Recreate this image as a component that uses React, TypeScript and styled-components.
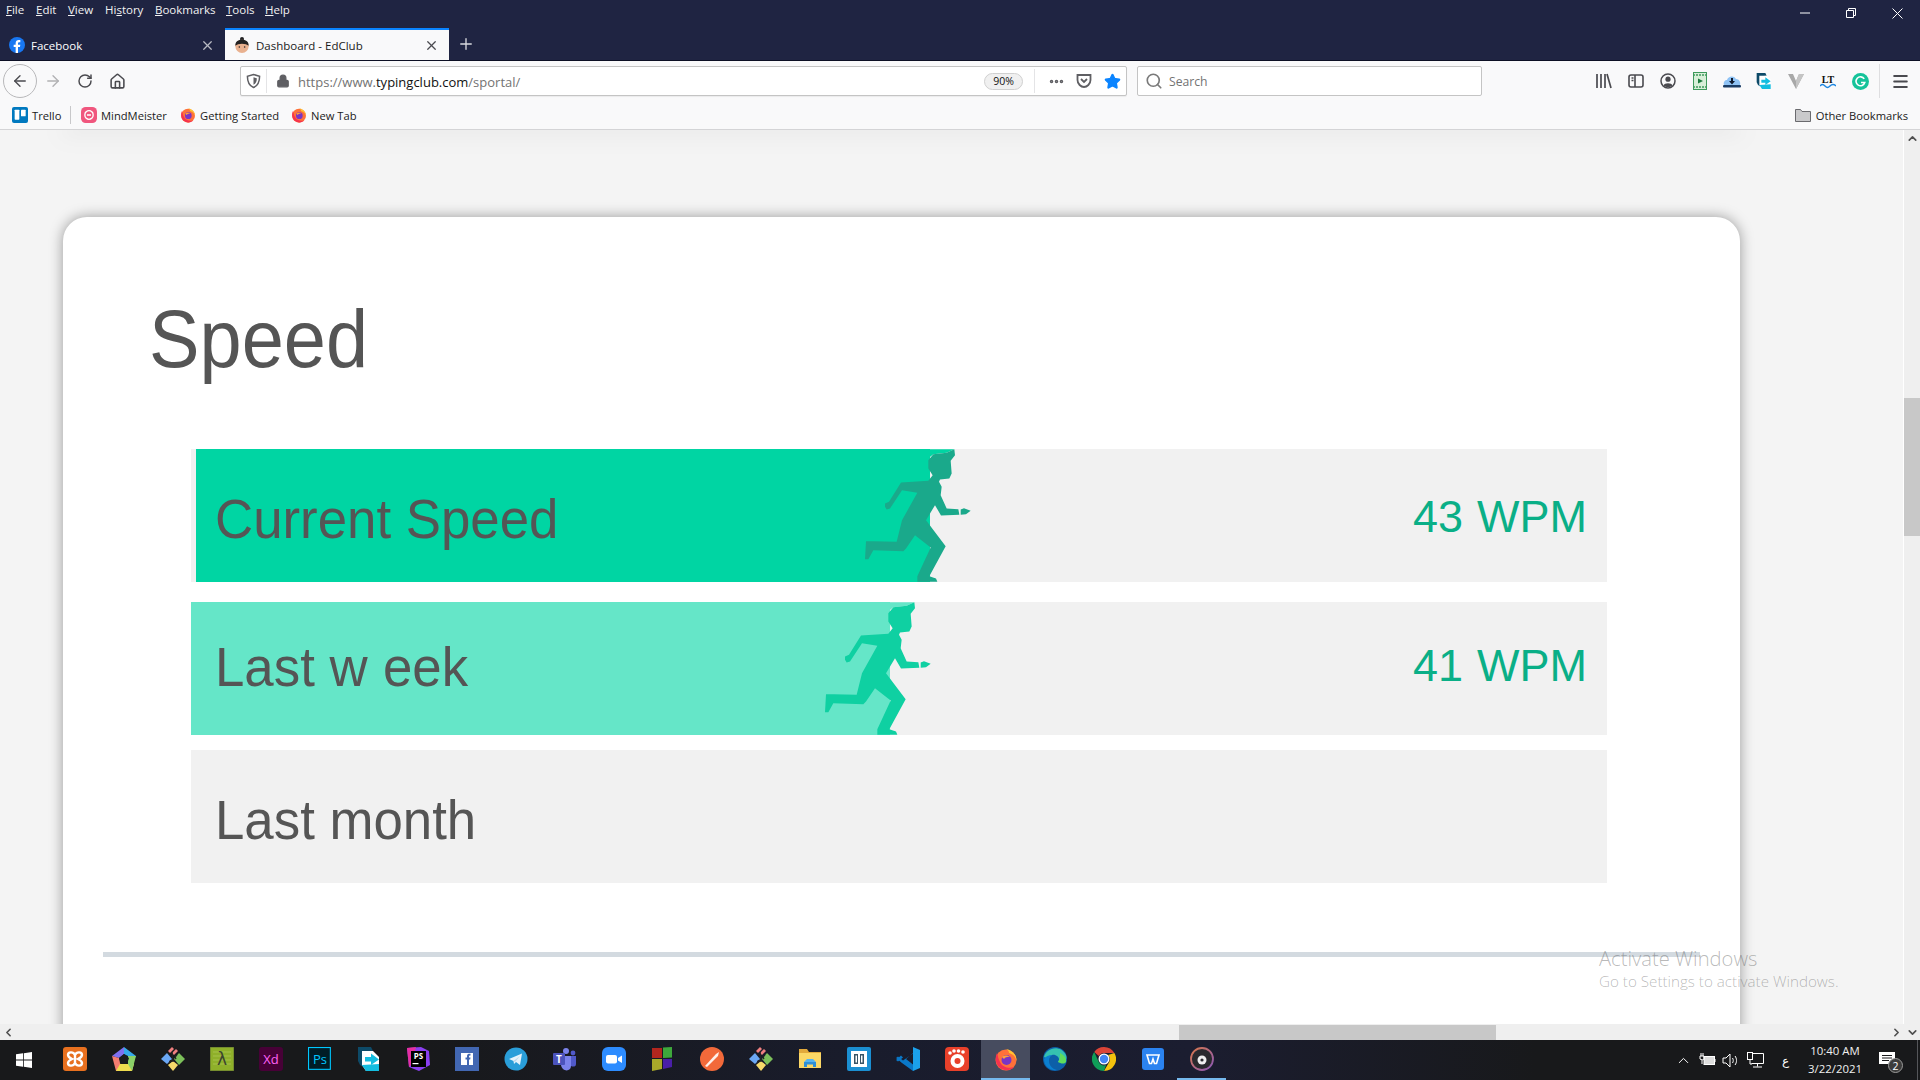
import React from "react";
import styled, { createGlobalStyle } from "styled-components";
import {
  ArrowLeft,
  ArrowRight,
  RotateCw,
  Home,
  Lock,
  Search,
  X,
  Plus,
  Menu,
  ChevronUp,
  ChevronDown,
  ChevronLeft,
  ChevronRight,
  MoreHorizontal,
  Star,
} from "lucide-react";

const GlobalStyle = createGlobalStyle`
  html, body {
    margin: 0;
    padding: 0;
    overflow: hidden;
  }
  * {
    box-sizing: border-box;
  }
`;

const Screen = styled.div`
  display: flex;
  flex-direction: column;
  width: 1920px;
  height: 1080px;
  overflow: hidden;
  font-family: "Open Sans", sans-serif;
`;

const TitleBar = styled.div`
  height: 61px;
  flex: none;
  background-color: #1f2442;
  color: #ffffff;
  border-bottom: 1px solid #0c0f24;
`;

const MenuRow = styled.div`
  display: flex;
  height: 28px;
`;

const MenuItem = styled.span<{ $width: number }>`
  width: ${(p) => p.$width}px;
  padding-top: 1px;
  font-size: 11.5px;
  line-height: 18px;
  color: #f2f2f2;
  u {
    text-decoration-thickness: 1px;
  }
`;

const MenuItems = styled.div`
  display: flex;
  padding-left: 6px;
`;

const WindowControls = styled.div`
  display: flex;
  margin-left: auto;
`;

const WindowButton = styled.div`
  display: flex;
  align-items: center;
  justify-content: center;
  width: 46px;
  height: 26px;
`;

const TabRow = styled.div`
  display: flex;
  align-items: stretch;
  height: 32px;
`;

const Tab = styled.div<{ $active?: boolean; $width: number }>`
  display: flex;
  align-items: center;
  gap: 6px;
  width: ${(p) => p.$width}px;
  padding: 0 10px 0 9px;
  font-size: 11.5px;
  color: ${(p) => (p.$active ? "#1b1b1b" : "#ffffff")};
  background-color: ${(p) => (p.$active ? "#f9f9fa" : "transparent")};
  border-top: 2px solid ${(p) => (p.$active ? "#0a84ff" : "transparent")};
`;

const TabClose = styled.span`
  display: flex;
  margin-left: auto;
`;

const NewTab = styled.div`
  display: flex;
  align-items: center;
  justify-content: center;
  width: 34px;
  color: #d8d9de;
`;

const Toolbar = styled.div`
  display: flex;
  align-items: center;
  flex: none;
  height: 40px;
  padding-left: 3px;
  background-color: #f9f9fa;
`;

const BackButton = styled.div`
  display: flex;
  align-items: center;
  justify-content: center;
  width: 34px;
  height: 34px;
  border: 1px solid #b8b8ba;
  border-radius: 50%;
  color: #4a4a4f;
`;

const NavSlot = styled.div<{ $dim?: boolean }>`
  display: flex;
  align-items: center;
  justify-content: center;
  width: 32px;
  height: 32px;
  color: ${(p) => (p.$dim ? "#b1b1b3" : "#4a4a4f")};
`;

const UrlBar = styled.div`
  display: flex;
  align-items: center;
  width: 887px;
  height: 30px;
  margin-left: 107px;
  background-color: #ffffff;
  border: 1px solid #c4c4c4;
  border-radius: 2px;
  box-shadow: 0 1px 1px rgba(0, 0, 0, 0.06);
`;

const ShieldBox = styled.div`
  display: flex;
  align-items: center;
  justify-content: center;
  width: 26px;
  height: 24px;
  border-right: 1px solid #e4e4e6;
`;

const LockBox = styled.div`
  display: flex;
  justify-content: center;
  width: 31px;
  color: #5f5f63;
`;

const UrlText = styled.span`
  padding-top: 1px;
  font-size: 13px;
  color: #737373;
  b {
    font-weight: 400;
    color: #111111;
  }
`;

const ZoomBadge = styled.span`
  display: flex;
  align-items: center;
  justify-content: center;
  width: 39px;
  height: 17px;
  margin-left: auto;
  margin-right: 11px;
  font-size: 10.5px;
  color: #111111;
  background-color: #f0f0f0;
  border: 1px solid #d0d0d0;
  border-radius: 9px;
`;

const UrlActions = styled.div`
  display: flex;
  align-items: center;
  height: 24px;
  padding-left: 7px;
  border-left: 1px solid #e4e4e6;
`;

const ActionSlot = styled.div`
  display: flex;
  align-items: center;
  justify-content: center;
  width: 28px;
  color: #5f5f63;
`;

const SearchBar = styled.div`
  display: flex;
  align-items: center;
  gap: 6px;
  width: 345px;
  height: 30px;
  margin-left: 10px;
  padding-left: 7px;
  font-size: 12.2px;
  color: #737373;
  background-color: #ffffff;
  border: 1px solid #c4c4c4;
  border-radius: 2px;
`;

const Extensions = styled.div`
  display: flex;
  align-items: center;
  margin-left: auto;
`;

const ExtSlot = styled.div`
  display: flex;
  align-items: center;
  justify-content: center;
  width: 32px;
`;

const ToolbarDivider = styled.div`
  width: 1px;
  height: 34px;
  margin-left: 3px;
  background-color: #dedee0;
`;

const MenuSlot = styled.div`
  display: flex;
  align-items: center;
  justify-content: center;
  width: 40px;
  color: #4a4a4f;
`;

const BookmarksBar = styled.div`
  display: flex;
  align-items: center;
  flex: none;
  height: 29px;
  padding-left: 12px;
  font-size: 11.2px;
  color: #1b1b1b;
  background-color: #f9f9fa;
  border-bottom: 1px solid #d4d4d6;
`;

const Bookmark = styled.div<{ $width: number }>`
  display: flex;
  align-items: center;
  gap: 4px;
  width: ${(p) => p.$width}px;
`;

const BookmarkDivider = styled.div`
  width: 1px;
  height: 18px;
  margin-right: 10px;
  background-color: #c8c8ca;
`;

const OtherBookmarks = styled.div`
  display: flex;
  align-items: center;
  gap: 5px;
  margin-left: auto;
  margin-right: 12px;
`;

const Body = styled.div`
  display: flex;
  flex: 1;
  min-height: 0;
`;

const PageColumn = styled.div`
  display: flex;
  flex: 1;
  flex-direction: column;
  min-width: 0;
`;

const Canvas = styled.div`
  position: relative;
  flex: 1;
  overflow: hidden;
  padding-left: 63px;
  background-color: #f4f4f4;
  border-right: 1px solid #ffffff;
`;

const PrevCardEdge = styled.div`
  width: 1677px;
  height: 1px;
  margin-top: -1px;
  box-shadow: 0 1px 20px rgba(0, 0, 0, 0.55);
`;

const Card = styled.div`
  width: 1677px;
  height: 900px;
  margin-top: 87px;
  padding-top: 77px;
  background-color: #ffffff;
  border-radius: 24px;
  box-shadow: 0 0 14px rgba(0, 0, 0, 0.38);
`;

const Heading = styled.h1`
  height: 90px;
  margin: 0 0 65px 86px;
  font-family: "Liberation Sans", Arial, sans-serif;
  font-size: 81px;
  font-weight: 400;
  line-height: 90px;
  color: #555555;
  transform: scaleX(0.935);
  transform-origin: left center;
`;

const SpeedRow = styled.div<{ $gap: number }>`
  display: flex;
  align-items: stretch;
  width: 1416px;
  height: 133px;
  margin-left: 128px;
  margin-bottom: ${(p) => p.$gap}px;
  font-family: "Liberation Sans", Arial, sans-serif;
  background-color: #f1f1f1;
`;

const Fill = styled.div<{
  $color: string;
  $offset: number;
  $pad: number;
  $width: number;
  $top: number;
  $bottom: number;
}>`
  position: relative;
  display: flex;
  align-items: center;
  width: ${(p) => p.$width}px;
  margin-left: ${(p) => p.$offset}px;
  padding: ${(p) => p.$top}px 0 ${(p) => p.$bottom}px ${(p) => p.$pad}px;
  background-color: ${(p) => p.$color};
`;

const RowLabel = styled.span`
  display: inline-block;
  font-size: 55px;
  white-space: nowrap;
  color: #555555;
  transform: scaleX(0.96);
  transform-origin: left center;
`;

const GapLetter = styled.span`
  margin-right: 16px;
`;

const RunnerSpot = styled.div`
  position: absolute;
  top: 0;
  right: -41px;
  display: flex;
`;

const SpeedValue = styled.span<{ $top: number; $bottom: number }>`
  display: flex;
  align-items: center;
  gap: 14px;
  margin-left: auto;
  padding: ${(p) => p.$top}px 20px ${(p) => p.$bottom}px 0;
  font-size: 45px;
  color: #0aaf87;
`;

const Divider = styled.div`
  height: 5px;
  margin: 69px 40px 0;
  background-color: #d3dae0;
`;

const ActivateNotice = styled.div`
  position: absolute;
  left: 1599px;
  top: 815px;
  color: rgba(70, 70, 70, 0.38);
  pointer-events: none;
`;

const ActivateTitle = styled.div`
  font-size: 20.2px;
  font-weight: 300;
  line-height: 26px;
`;

const ActivateHint = styled.div`
  font-size: 15.2px;
  font-weight: 300;
  line-height: 20px;
`;

const HScroll = styled.div`
  display: flex;
  align-items: center;
  flex: none;
  height: 16px;
  color: #505050;
  background-color: #efefef;
`;

const ScrollArrow = styled.div`
  display: flex;
  align-items: center;
  justify-content: center;
  flex: none;
  width: 16px;
  height: 16px;
`;

const HThumb = styled.div`
  width: 317px;
  height: 15px;
  margin-left: 1163px;
  background-color: #c8c8c8;
`;

const VScroll = styled.div`
  display: flex;
  flex: none;
  flex-direction: column;
  width: 16px;
  color: #505050;
  background-color: #efefef;
`;

const VThumb = styled.div`
  height: 138px;
  margin-top: 252px;
  background-color: #c8c8c8;
`;

const PushEnd = styled.div`
  margin: auto 0 0 auto;
`;

const Taskbar = styled.div`
  display: flex;
  align-items: stretch;
  flex: none;
  height: 40px;
  padding-left: 1px;
  background: linear-gradient(90deg, #18191b 0%, #18191b 22%, #191c2c 45%, #1b1d30 62%, #18191b 80%);
`;

const StartSlot = styled.div`
  display: flex;
  align-items: center;
  justify-content: center;
  width: 49px;
  padding-right: 3px;
`;

const TaskSlot = styled.div<{ $active?: boolean; $running?: boolean }>`
  display: flex;
  align-items: center;
  justify-content: center;
  width: 49px;
  background-color: ${(p) => (p.$active ? "#474c5f" : "transparent")};
  border-bottom: 2px solid ${(p) => (p.$active || p.$running ? "#76b9ed" : "transparent")};
`;

const Tray = styled.div`
  display: flex;
  align-items: center;
  margin-left: auto;
  color: #ffffff;
`;

const TraySlot = styled.div<{ $width: number }>`
  display: flex;
  align-items: center;
  justify-content: center;
  width: ${(p) => p.$width}px;
`;

const KeyboardGlyph = styled.span`
  font-size: 12px;
`;

const Clock = styled.div`
  width: 72px;
  font-size: 11.4px;
  line-height: 18px;
  text-align: center;
  color: #f0f0f0;
`;

const NotifySlot = styled.div`
  position: relative;
  display: flex;
  justify-content: center;
  width: 32px;
`;

const NotifyBadge = styled.span`
  position: absolute;
  left: 17px;
  top: 7px;
  display: flex;
  align-items: center;
  justify-content: center;
  width: 15px;
  height: 15px;
  font-size: 10.5px;
  color: #ffffff;
  background-color: #3c3c3c;
  border: 1px solid #9a9a9a;
  border-radius: 50%;
`;

const ShowDesktop = styled.div`
  align-self: stretch;
  width: 17px;
  margin-left: 0;
  padding-left: 14px;
  &::after {
    content: "";
    display: block;
    width: 1px;
    height: 100%;
    background-color: #55565a;
  }
`;

const Ic = ({ size = 24, children, vb = "0 0 24 24" }: { size?: number; children: React.ReactNode; vb?: string }) => (
  <svg width={size} height={size} viewBox={vb} style={{ display: "block" }}>
    {children}
  </svg>
);

const RunnerFigure = ({ body, wedge }: { body: string; wedge: string }) => (
  <svg width={106} height={133} viewBox="75 27 318 398" style={{ display: "block" }}>
    <path d="M268 27H343L320 38 280 42 268 52Z" fill={wedge} />
    <path
      d="M343 27L345 45 332 62 335 100 328 115 300 118 297 125 305 140 302 165 320 205 355 207 358 224 303 226 285 195 258 240 317 318 268 408 288 415 292 425H232V408L272 322 225 285 198 325 190 333 100 330 85 357H75L78 303H100L170 305 186 240 232 158 186 150 150 205 140 208 135 200V190L147 185 183 127 265 122 278 105 265 85V60L280 42 320 38Z"
      fill={body}
    />
    <path d="M362 208L372 204 392 212 378 222 362 224Z" fill={body} />
  </svg>
);

const FirefoxIcon = ({ size = 24 }: { size?: number }) => (
  <Ic size={size}>
    <circle cx="12" cy="13" r="10.5" fill="#ff7139" />
    <path d="M12 2C18 3 23 8 22.5 14 21 7 17 7 15 6 15 4 14 3 12 2Z" fill="#ffc531" />
    <path d="M3 6C1 10 1 17 6 21 10 24 17 24 20 20 15 22 8 20 6 15 4 12 4 8 3 6Z" fill="#f5324f" />
    <circle cx="12.5" cy="13" r="5" fill="#7a35c4" />
    <path d="M8 10C10 8 14 8 16 10 14 9.5 11 10.5 10 12Z" fill="#ffa436" />
  </Ic>
);

const KrakenIcon = () => (
  <Ic>
    <path d="M0 12L6 6 11 12 6 17Z" fill="#6ba7f5" />
    <path d="M13 12L18 6 24 12 18 18Z" fill="#7cc05a" />
    <path d="M7 18L12 14 17 18 12 24Z" fill="#f6d96a" />
    <path d="M7 4L11 0 13 2 9 6ZM11 6L15 2 17 4 13 8Z" fill="#f08080" />
    <path d="M11 5L12 15M15 12C13 9 15 8 16 9M9 16C8 14 10 13 11 14" stroke="#222" strokeWidth="1.4" fill="none" />
  </Ic>
);

const DocArrowIcon = ({ size = 24 }: { size?: number }) => (
  <Ic size={size}>
    <path d="M1 0H14L16 4 6 5V20L3 18 1 14Z" fill="#0d4a68" />
    <path d="M5 4H16L22 10V24H9L5 18Z" fill="#ffffff" />
    <path d="M9 24L5 18 22 17V24Z" fill="#14bde0" />
    <path d="M8 10H14V6.5L22 12.5 14 18V14.5H8Z" fill="#14bde0" />
  </Ic>
);

const TaskIcons: { key: string; node: React.ReactNode; active?: boolean; running?: boolean }[] = [
  {
    key: "xampp",
    node: (
      <Ic>
        <rect width="24" height="24" rx="3" fill="#e8701f" />
        <path
          d="M12 8C10 4 5 5 5 8 5 10 7 11 9 12 7 13 5 14 5 16 5 19 10 20 12 16 14 20 19 19 19 16 19 14 17 13 15 12 17 11 19 10 19 8 19 5 14 4 12 8ZM12 8V16"
          stroke="#fff"
          strokeWidth="2.4"
          fill="none"
        />
      </Ic>
    ),
  },
  {
    key: "pentagon",
    node: (
      <Ic>
        <path d="M12 0L24 9 21 14 16 9 12 7Z" fill="#36a9ea" />
        <path d="M12 0L0 9 7 11 12 7Z" fill="#7e70f0" />
        <path d="M0 9L4 24H11L8 16 7 11Z" fill="#f47c70" />
        <path d="M4 24H20L22 17 16 17 8 17Z" fill="#efdc4e" />
        <path d="M24 9L20 24 16 17 16 9Z" fill="#8ad068" />
        <path d="M12 7L17 11 15 17H9L7 11Z" fill="#1b1b1d" />
      </Ic>
    ),
  },
  { key: "kraken", node: <KrakenIcon /> },
  {
    key: "lambda",
    node: (
      <Ic>
        <rect width="24" height="24" fill="#8fb02a" stroke="#5c6b33" />
        <path d="M3 5H21M3 9H21M3 13H21M3 17H21" stroke="#a6c24a" strokeWidth="1" />
        <text x="12" y="18" textAnchor="middle" fontSize="17" fontFamily="DejaVu Sans" fill="#3c4430">
          λ
        </text>
      </Ic>
    ),
  },
  {
    key: "xd",
    node: (
      <Ic>
        <rect width="24" height="24" rx="3" fill="#470137" />
        <text x="12" y="17" textAnchor="middle" fontSize="13" fontFamily="Open Sans" fill="#ff61f6">
          Xd
        </text>
      </Ic>
    ),
  },
  {
    key: "ps",
    node: (
      <Ic>
        <rect x=".5" y=".5" width="20" height="20" fill="#001d26" stroke="#00c8ff" strokeWidth="1" transform="scale(1.09)" />
        <text x="12" y="17" textAnchor="middle" fontSize="13" fontFamily="Open Sans" fill="#00c8ff">
          Ps
        </text>
      </Ic>
    ),
  },
  { key: "doc", node: <DocArrowIcon /> },
  {
    key: "phpstorm",
    node: (
      <Ic>
        <path d="M1 1L15 0 23 4 24 18 13 24 3 20Z" fill="#8a3ff0" />
        <path d="M1 1L10 0 5 18 3 20Z" fill="#e62ea0" />
        <rect x="5" y="4" width="15" height="16" fill="#000" />
        <text x="12.5" y="12" textAnchor="middle" fontSize="8" fontWeight="700" fontFamily="Open Sans" fill="#fff">
          PS
        </text>
        <rect x="6.5" y="16" width="6" height="1.2" fill="#fff" />
      </Ic>
    ),
  },
  {
    key: "facebook",
    node: (
      <Ic>
        <rect width="24" height="24" fill="#4267b2" />
        <rect x="6" y="6" width="12" height="12" fill="#fff" />
        <path d="M12 18V12.5H10.5V10.5H12V9C12 7 13.5 6.5 15.5 6.7V8.5C14.5 8.4 14 8.6 14 9.4V10.5H15.5L15.2 12.5H14V18Z" fill="#4267b2" />
      </Ic>
    ),
  },
  {
    key: "telegram",
    node: (
      <Ic>
        <circle cx="12" cy="12" r="11.5" fill="#2a9ed9" />
        <path d="M5 12L18 6.5 16 18 12 15 10 17 9.5 14Z" fill="#e6f3fb" />
        <path d="M9.5 14L16 9 11 15Z" fill="#bcd9ec" />
      </Ic>
    ),
  },
  {
    key: "teams",
    node: (
      <Ic>
        <circle cx="13" cy="4" r="3" fill="#7b83eb" />
        <circle cx="20" cy="6" r="2.4" fill="#5059c9" />
        <path d="M16 9H23V17C23 20 20 20 18 19Z" fill="#5059c9" />
        <path d="M8 9H18V19C18 25 9 25 8 18Z" fill="#7b83eb" />
        <rect y="6" width="12" height="12" rx="1" fill="#4b53bc" />
        <text x="6" y="15.5" textAnchor="middle" fontSize="10" fontWeight="700" fontFamily="Open Sans" fill="#fff">
          T
        </text>
      </Ic>
    ),
  },
  {
    key: "zoom",
    node: (
      <Ic>
        <rect width="24" height="24" rx="6" fill="#2d8cff" />
        <rect x="4" y="8" width="11" height="8.5" rx="2" fill="#fff" />
        <path d="M16 11L20 8.5V16L16 13.5Z" fill="#fff" />
      </Ic>
    ),
  },
  {
    key: "squares",
    node: (
      <Ic>
        <path d="M1 1H11V11H1Z" fill="#b3261e" />
        <path d="M12 0.5L21 0V10.5L12 11Z" fill="#3ea83c" />
        <path d="M1 12L11 12V22L1 24Z" fill="#a8a82a" />
        <path d="M12 12H21V20L12 22Z" fill="#4a1fa8" />
      </Ic>
    ),
  },
  {
    key: "postman",
    node: (
      <Ic>
        <circle cx="12" cy="12" r="12" fill="#f2693a" />
        <path d="M5 19L16 7 19 5 18 9 7 20Z" fill="#fff" opacity=".9" />
      </Ic>
    ),
  },
  { key: "kraken2", node: <KrakenIcon /> },
  {
    key: "folder",
    node: (
      <Ic>
        <path d="M1 2H9L11 5H23V21H1Z" fill="#e2a93b" />
        <path d="M1 6H23V21H1Z" fill="#fbd766" />
        <path d="M6 20V15H18V20H15V17.5H9V20Z" fill="#2f8fd6" />
        <path d="M6 15L9 12H15L18 15Z" fill="#56b4f0" />
      </Ic>
    ),
  },
  {
    key: "brackets",
    node: (
      <Ic>
        <rect width="24" height="24" rx="2" fill="#1b8fd2" />
        <path d="M4 4H20V20H4Z" fill="#fff" />
        <path d="M7 7H11V17H7ZM13 7H17V17H13Z" fill="#16364a" opacity=".85" />
        <path d="M8.5 8.5H10V15.5H8.5ZM14 8.5H15.5V15.5H14Z" fill="#fff" />
      </Ic>
    ),
  },
  {
    key: "vscode",
    node: (
      <Ic>
        <path d="M17 0L24 3V21L17 24Z" fill="#1ba1ec" />
        <path d="M17 0V6.5L7 13.5 2 9.5 0 11 6 16 17 24V17.5L10 12 17 6Z" fill="#0a78c8" />
        <path d="M0 13L2 14.5 7 10.5 5 8.5Z" fill="#0a78c8" />
      </Ic>
    ),
  },
  {
    key: "gom",
    node: (
      <Ic>
        <rect width="24" height="24" rx="4" fill="#e8402a" />
        <circle cx="12.5" cy="14" r="7" fill="#fff" />
        <circle cx="12.5" cy="14" r="3" fill="#e8402a" />
        <circle cx="5" cy="6" r="1.8" fill="#fff" />
        <circle cx="9" cy="4" r="1.8" fill="#fff" />
        <circle cx="13.5" cy="4" r="1.8" fill="#fff" />
        <circle cx="18" cy="5" r="1.8" fill="#fff" />
      </Ic>
    ),
  },
  { key: "firefox", node: <FirefoxIcon />, active: true },
  {
    key: "edge",
    node: (
      <Ic>
        <circle cx="12" cy="12" r="12" fill="#0d5fa8" />
        <path d="M1 10C3 1 17-3 23 8 25 15 19 16 15 15 18 12 14 7 9 8 5 9 3 12 1 10Z" fill="#35c1b0" />
        <path d="M17 6C21 8 24 11 23 15 21 18 17 16 15 15 17 12 17 9 17 6Z" fill="#5fdc5c" />
        <path d="M9 8C4 11 5 21 14 23 8 24 1 20 1 12 3 9 6 8 9 8Z" fill="#0b7fd0" />
      </Ic>
    ),
  },
  {
    key: "chrome",
    node: (
      <Ic>
        <path d="M12 0A12 12 0 0 1 22.4 6H12A6 6 0 0 0 6.8 9L2.2 5A12 12 0 0 1 12 0Z" fill="#db4437" />
        <path d="M22.4 6A12 12 0 0 1 12 24L17.2 15A6 6 0 0 0 16 8Z" fill="#f4c20d" />
        <path d="M12 24A12 12 0 0 1 2.2 5L6.8 15A6 6 0 0 0 14 18Z" fill="#0f9d58" />
        <circle cx="12" cy="12" r="5.5" fill="#fff" />
        <circle cx="12" cy="12" r="4.2" fill="#4285f4" />
      </Ic>
    ),
  },
  {
    key: "wps",
    node: (
      <Ic>
        <rect x="1" y="1" width="22" height="22" rx="3" fill="#2b83f0" />
        <path d="M6 8H18L15.5 16.5H13.5L12 12 10.5 16.5H8.5Z" fill="none" stroke="#fff" strokeWidth="1.6" />
      </Ic>
    ),
  },
  {
    key: "disc",
    running: true,
    node: (
      <Ic>
        <defs>
          <linearGradient id="discRing" x1="0" y1="0" x2="1" y2="1">
            <stop offset="0" stopColor="#d9774a" />
            <stop offset="1" stopColor="#8a58b8" />
          </linearGradient>
        </defs>
        <circle cx="12" cy="12" r="11" fill="#2a2a2e" stroke="url(#discRing)" strokeWidth="1.8" />
        <circle cx="12" cy="13" r="4.5" fill="#f0f0f0" />
        <circle cx="12" cy="13" r="1.6" fill="#2a2a2e" />
      </Ic>
    ),
  },
];

const App = () => {
  return (
    <Screen>
      <GlobalStyle />
      <TitleBar>
        <MenuRow>
          <MenuItems>
            <MenuItem $width={30}><u>F</u>ile</MenuItem>
            <MenuItem $width={32}><u>E</u>dit</MenuItem>
            <MenuItem $width={37}><u>V</u>iew</MenuItem>
            <MenuItem $width={50}>Hi<u>s</u>tory</MenuItem>
            <MenuItem $width={71}><u>B</u>ookmarks</MenuItem>
            <MenuItem $width={39}><u>T</u>ools</MenuItem>
            <MenuItem $width={30}><u>H</u>elp</MenuItem>
          </MenuItems>
          <WindowControls>
            <WindowButton>
              <svg width="10" height="10" viewBox="0 0 10 10">
                <path d="M0 5H10" stroke="#fff" />
              </svg>
            </WindowButton>
            <WindowButton>
              <svg width="10" height="10" viewBox="0 0 10 10" fill="none" stroke="#fff">
                <path d="M.5 2.5H7.5V9.5H.5ZM2.5 2.5V.5H9.5V7.5H7.5" />
              </svg>
            </WindowButton>
            <WindowButton>
              <svg width="11" height="11" viewBox="0 0 11 11" stroke="#fff">
                <path d="M.5 .5L10.5 10.5M10.5 .5L.5 10.5" />
              </svg>
            </WindowButton>
          </WindowControls>
        </MenuRow>
        <TabRow>
          <Tab $width={225}>
            <Ic size={16}>
              <circle cx="12" cy="12" r="12" fill="#1877f2" />
              <path d="M10 24V15H7V11.5H10V9C10 6 12 4.5 14.5 4.5H17V8H15C14 8 13.5 8.5 13.5 9.5V11.5H17L16.4 15H13.5V24Z" fill="#fff" />
            </Ic>
            Facebook
            <TabClose><X size={15} color="#b9bac2" strokeWidth={2} /></TabClose>
          </Tab>
          <Tab $active $width={224}>
            <Ic size={16}>
              <circle cx="12" cy="3" r="3" fill="#222" />
              <circle cx="12" cy="14" r="10" fill="#e9b18f" />
              <path d="M2 13C2 6 7 4 12 4S22 6 22 13C18 9 6 9 2 13Z" fill="#222" />
              <circle cx="8" cy="15" r="1.2" fill="#222" />
              <circle cx="16" cy="15" r="1.2" fill="#222" />
            </Ic>
            Dashboard - EdClub
            <TabClose><X size={15} color="#4a4a4f" strokeWidth={2} /></TabClose>
          </Tab>
          <NewTab><Plus size={18} strokeWidth={1.8} /></NewTab>
        </TabRow>
      </TitleBar>

      <Toolbar>
        <BackButton><ArrowLeft size={18} strokeWidth={1.8} /></BackButton>
        <NavSlot $dim><ArrowRight size={18} strokeWidth={1.8} /></NavSlot>
        <NavSlot><RotateCw size={16} strokeWidth={2.2} /></NavSlot>
        <NavSlot><Home size={17} strokeWidth={2.2} /></NavSlot>
        <UrlBar>
          <ShieldBox>
            <svg width="15" height="16" viewBox="0 0 16 16" fill="none" stroke="#5f5f63" strokeWidth="1.6">
              <path d="M8 1L14.5 3C14.5 9 13 13 8 15 3 13 1.5 9 1.5 3Z" />
              <path d="M8 4L11.5 5C11.5 8 11 10.5 8 12Z" fill="#5f5f63" stroke="none" />
            </svg>
          </ShieldBox>
          <LockBox><Lock size={14} fill="#5f5f63" strokeWidth={2} /></LockBox>
          <UrlText>https://www.<b>typingclub.com</b>/sportal/</UrlText>
          <ZoomBadge>90%</ZoomBadge>
          <UrlActions>
            <ActionSlot><MoreHorizontal size={17} strokeWidth={3} /></ActionSlot>
            <ActionSlot>
              <svg width="16" height="16" viewBox="0 0 16 16" fill="none" stroke="#5f5f63" strokeWidth="1.8">
                <path d="M1.5 2H14.5V7C14.5 11 11 14 8 14S1.5 11 1.5 7Z" />
                <path d="M5 6L8 9 11 6" />
              </svg>
            </ActionSlot>
            <ActionSlot><Star size={17} fill="#0a84ff" color="#0a84ff" strokeWidth={2} /></ActionSlot>
          </UrlActions>
        </UrlBar>
        <SearchBar>
          <Search size={18} color="#7a7a7a" strokeWidth={2.2} />
          Search
        </SearchBar>
        <Extensions>
          <ExtSlot>
            <svg width="16" height="16" viewBox="0 0 16 16" stroke="#4a4a4f" strokeWidth="1.7" fill="none">
              <path d="M1 1V15M5 1V15M9 1V15M11 1L15 15" />
            </svg>
          </ExtSlot>
          <ExtSlot>
            <svg width="16" height="16" viewBox="0 0 16 16" stroke="#4a4a4f" strokeWidth="1.6" fill="none">
              <rect x="1" y="2" width="14" height="12" rx="2" />
              <path d="M7 2V14M3.5 5H5.5M3.5 7.5H5.5" />
            </svg>
          </ExtSlot>
          <ExtSlot>
            <svg width="16" height="16" viewBox="0 0 16 16">
              <circle cx="8" cy="8" r="7" fill="none" stroke="#4a4a4f" strokeWidth="1.5" />
              <circle cx="8" cy="6.2" r="2.6" fill="#4a4a4f" />
              <path d="M3.5 12.5C4.5 9.5 11.5 9.5 12.5 12.5 10 14.5 6 14.5 3.5 12.5Z" fill="#4a4a4f" />
            </svg>
          </ExtSlot>
          <ExtSlot>
            <svg width="14" height="18" viewBox="0 0 14 18">
              <rect x=".5" y=".5" width="13" height="17" fill="#d8efd8" stroke="#3f9a5c" />
              <path d="M0 3H14M0 15H14" stroke="#3f9a5c" strokeWidth="1.5" strokeDasharray="2 1" />
              <path d="M5 6.5L10 9 5 11.5Z" fill="#1c7a3c" />
            </svg>
          </ExtSlot>
          <ExtSlot>
            <svg width="18" height="16" viewBox="0 0 18 16">
              <path d="M1 12C0 9 2 7 4 7 5 3 11 2 13 6 16 6 18 9 17 12Z" fill="#8fc3f5" />
              <rect y="12" width="18" height="2.5" rx="1" fill="#1b3d66" />
              <path d="M8 5H10V8H12L9 11.5 6 8H8Z" fill="#0f1a2e" />
            </svg>
          </ExtSlot>
          <ExtSlot><DocArrowIcon size={16} /></ExtSlot>
          <ExtSlot>
            <svg width="16" height="16" viewBox="0 0 16 16">
              <path d="M0 1H5L8 8 11 1H16L8 16Z" fill="#a8a8a8" />
              <path d="M8 8L11 1H16L8 16Z" fill="#c4c4c4" />
            </svg>
          </ExtSlot>
          <ExtSlot>
            <svg width="16" height="16" viewBox="0 0 16 16" fill="none">
              <text x="8" y="10" textAnchor="middle" fontSize="10" fontWeight="700" fontFamily="Liberation Serif" fill="#111">LT</text>
              <path d="M0 13C2 11 3 11 5 13S8 15 10 13 14 11 16 13" stroke="#1d86e0" strokeWidth="1.4" />
            </svg>
          </ExtSlot>
          <ExtSlot>
            <svg width="17" height="17" viewBox="0 0 16 16">
              <circle cx="8" cy="8" r="8" fill="#15c39a" />
              <path d="M11.5 5.5A4.2 4.2 0 1 0 12 9H8.5" fill="none" stroke="#fff" strokeWidth="1.5" />
            </svg>
          </ExtSlot>
        </Extensions>
        <ToolbarDivider />
        <MenuSlot><Menu size={19} strokeWidth={2.4} /></MenuSlot>
      </Toolbar>

      <BookmarksBar>
        <Bookmark $width={58}>
          <Ic size={16}>
            <rect width="24" height="24" rx="3" fill="#0079bf" />
            <rect x="4" y="4" width="7" height="15" rx="1" fill="#fff" />
            <rect x="13.5" y="4" width="7" height="10" rx="1" fill="#fff" />
          </Ic>
          Trello
        </Bookmark>
        <BookmarkDivider />
        <Bookmark $width={99}>
          <Ic size={16}>
            <rect width="24" height="24" rx="7" fill="#f0567e" />
            <path d="M8 7C10 5 14 5 16 7 19 9 19 15 16 17 14 19 10 19 8 17 5 15 5 9 8 7ZM9 12H15" stroke="#fff" strokeWidth="2" fill="none" />
          </Ic>
          MindMeister
        </Bookmark>
        <Bookmark $width={111}>
          <FirefoxIcon size={16} />
          Getting Started
        </Bookmark>
        <Bookmark $width={80}>
          <FirefoxIcon size={16} />
          New Tab
        </Bookmark>
        <OtherBookmarks>
          <svg width="16" height="14" viewBox="0 0 16 14" fill="#c9c9cb" stroke="#6a6a6e">
            <path d="M.5 13.5V1.5H5.5L7 3.5H15.5V13.5Z" />
          </svg>
          Other Bookmarks
        </OtherBookmarks>
      </BookmarksBar>

      <Body>
        <PageColumn>
          <Canvas>
            <PrevCardEdge />
            <Card>
              <Heading>Speed</Heading>
              <SpeedRow $gap={20}>
                <Fill $color="#00d5a3" $offset={5} $pad={19} $width={734} $top={6} $bottom={0}>
                  <RowLabel>Current Speed</RowLabel>
                  <RunnerSpot><RunnerFigure body="#1aa98b" wedge="#00d5a3" /></RunnerSpot>
                </Fill>
                <SpeedValue $top={3} $bottom={0}><span>43</span><span>WPM</span></SpeedValue>
              </SpeedRow>
              <SpeedRow $gap={15}>
                <Fill $color="#65e6c8" $offset={0} $pad={24} $width={699} $top={0} $bottom={3}>
                  <RowLabel>Last w<GapLetter />eek</RowLabel>
                  <RunnerSpot><RunnerFigure body="#0fd0a2" wedge="#65e6c8" /></RunnerSpot>
                </Fill>
                <SpeedValue $top={0} $bottom={5}><span>41</span><span>WPM</span></SpeedValue>
              </SpeedRow>
              <SpeedRow $gap={0}>
                <Fill $color="transparent" $offset={0} $pad={24} $width={699} $top={6} $bottom={0}>
                  <RowLabel>Last month</RowLabel>
                </Fill>
              </SpeedRow>
              <Divider />
            </Card>
            <ActivateNotice>
              <ActivateTitle>Activate Windows</ActivateTitle>
              <ActivateHint>Go to Settings to activate Windows.</ActivateHint>
            </ActivateNotice>
          </Canvas>
          <HScroll>
            <ScrollArrow><ChevronLeft size={13} strokeWidth={3} /></ScrollArrow>
            <HThumb />
            <PushEnd>
              <ScrollArrow><ChevronRight size={13} strokeWidth={3} /></ScrollArrow>
            </PushEnd>
          </HScroll>
        </PageColumn>
        <VScroll>
          <ScrollArrow><ChevronUp size={13} strokeWidth={3} /></ScrollArrow>
          <VThumb />
          <PushEnd>
            <ScrollArrow><ChevronDown size={13} strokeWidth={3} /></ScrollArrow>
          </PushEnd>
        </VScroll>
      </Body>

      <Taskbar>
        <StartSlot>
          <svg width="16" height="16" viewBox="0 0 16 16" fill="#fff">
            <path d="M0 2.3L7 1.3V7.6H0ZM7.8 1.2L16 0V7.6H7.8ZM0 8.4H7V14.7L0 13.7ZM7.8 8.4H16V16L7.8 14.8Z" />
          </svg>
        </StartSlot>
        {TaskIcons.map((item) => (
          <TaskSlot key={item.key} $active={item.active} $running={item.running}>
            {item.node}
          </TaskSlot>
        ))}
        <Tray>
          <TraySlot $width={20}><ChevronUp size={17} strokeWidth={1.4} /></TraySlot>
          <TraySlot $width={28}>
            <svg width="17" height="14" viewBox="0 0 17 14" fill="none" stroke="#fff">
              <rect x="5" y="3.5" width="10.5" height="8" fill="#ddd" />
              <path d="M16 6V9M2 0V3M4 0V3M1 3H5V6C5 7 2 7 1 6ZM3 7V11" />
            </svg>
          </TraySlot>
          <TraySlot $width={18}>
            <svg width="17" height="15" viewBox="0 0 17 15" fill="none" stroke="#fff">
              <path d="M1 5H4L8 1V14L4 10H1ZM10.5 5C11.5 6.5 11.5 8.5 10.5 10M13 3C15 5.5 15 9.5 13 12" />
            </svg>
          </TraySlot>
          <TraySlot $width={32}>
            <svg width="17" height="16" viewBox="0 0 17 16" fill="none" stroke="#fff">
              <path d="M4.5 1.5H16.5V11.5H4.5M10.5 11.5V14.5M6 15H15" />
              <rect x=".5" y=".5" width="5" height="7" fill="#18191b" />
              <path d="M3 8V12H5" />
            </svg>
          </TraySlot>
          <TraySlot $width={28}><KeyboardGlyph>ع</KeyboardGlyph></TraySlot>
          <Clock>
            10:40 AM
            <br />
            3/22/2021
          </Clock>
          <NotifySlot>
            <svg width="18" height="18" viewBox="0 0 18 18">
              <path d="M1 1H17V13H1Z" fill="#fff" />
              <path d="M4 4.5H14M4 7H14M4 9.5H11" stroke="#18191b" />
            </svg>
            <NotifyBadge>2</NotifyBadge>
          </NotifySlot>
          <ShowDesktop />
        </Tray>
      </Taskbar>
    </Screen>
  );
};

export default App;
